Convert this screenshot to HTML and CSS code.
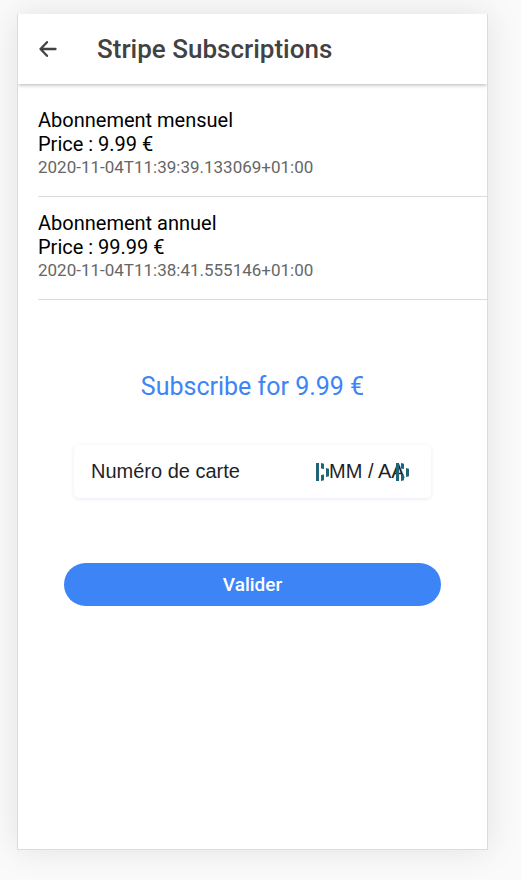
FILE: index.html
```html
<!DOCTYPE html>
<html lang="fr">
<head>
<meta charset="utf-8">
<meta name="viewport" content="width=device-width, initial-scale=1">
<title>Stripe Subscriptions</title>
<link rel="stylesheet" href="styles.css">
</head>
<body>
<div class="device">
  <header class="toolbar">
    <button class="back" type="button" aria-label="Back">
      <svg width="19" height="18" viewBox="0 0 19 18" fill="none" stroke="currentColor" stroke-width="2.3" stroke-linecap="round" stroke-linejoin="round"><path d="M9 2.200 2.500 9 9 15.800M2.500 9H17.500"/></svg>
    </button>
    <h1 class="title">Stripe Subscriptions</h1>
  </header>
  <main>
    <ul class="plans">
      <li class="plan">
        <h2 class="plan-line">Abonnement mensuel</h2>
        <p class="plan-line">Price : 9.99 €</p>
        <p class="plan-date">2020-11-04T11:39:39.133069+01:00</p>
      </li>
      <li class="plan">
        <h2 class="plan-line">Abonnement annuel</h2>
        <p class="plan-line">Price : 99.99 €</p>
        <p class="plan-date">2020-11-04T11:38:41.555146+01:00</p>
      </li>
    </ul>
    <form class="checkout">
      <h2 class="amount">Subscribe for 9.99 €</h2>
      <div class="card">
        <span class="field number">
          <input type="text" aria-label="Numéro de carte" placeholder="Numéro de carte">
          <svg class="fill-icon" width="13" height="20" viewBox="0 0 13 20" fill="currentColor"><path d="M0 1h3v18H0zM5 1l3 .7v5.300l-3-.5zM5 13l3-.5v5.800l-3 .7zM10 6l3 .8v7.400l-3 .8z"/></svg>
        </span>
        <span class="field expiry">
          <input type="text" aria-label="MM / AA" placeholder="MM / AA">
          <svg class="fill-icon" width="13" height="20" viewBox="0 0 13 20" fill="currentColor"><path d="M0 1h3v18H0zM5 1l3 .7v5.300l-3-.5zM5 13l3-.5v5.800l-3 .7zM10 6l3 .8v7.400l-3 .8z"/></svg>
        </span>
      </div>
      <button class="submit" type="button">Valider</button>
    </form>
  </main>
</div>
</body>
</html>
```
FILE: styles.css
```css
* {
  box-sizing: border-box;
}

body {
  margin: 0;
  min-height: 100vh;
  padding: 14px 33px 30px 17px;
  display: flex;
  background: #fafafa;
  font-family: Roboto, "Liberation Sans", sans-serif;
  color: #000;
}

h1, h2, p, ul {
  margin: 0;
  padding: 0;
  font-weight: 400;
}

.device {
  flex: 1;
  min-width: 0;
  background: #fff;
  border: 1px solid #dcdcdc;
  border-top: 0;
  box-shadow: 0 0 32px rgba(0, 0, 0, 0.1);
}

.toolbar {
  height: 70px;
  padding: 0 20px;
  display: flex;
  align-items: center;
  gap: 40px;
  color: #424242;
  box-shadow: 0 1px 4px rgba(0, 0, 0, 0.3);
  clip-path: inset(0 0 -8px 0);
}

.back {
  display: flex;
  padding: 0;
  border: 0;
  background: none;
  color: inherit;
}

.title {
  font-size: 26px;
  line-height: 30px;
  font-weight: 500;
}

.plans {
  list-style: none;
  padding: 10px 0 0 20px;
}

.plan {
  padding: 14px 0 18px;
  border-bottom: 1px solid #dcdcdc;
}

.plan-line {
  font-size: 20px;
  line-height: 24px;
}

.plan-date {
  font-size: 17px;
  line-height: 22px;
  color: #666;
}

.checkout {
  padding: 72px 46px 0;
}

.amount {
  font-size: 25px;
  line-height: 30px;
  text-align: center;
  color: #3d84f7;
}

.card {
  height: 53px;
  margin: 43px 10px 65px;
  padding: 0 22px 0 17px;
  display: flex;
  align-items: center;
  border-radius: 5px;
  box-shadow: 0 1px 4px #e6ebf1;
}

.field {
  position: relative;
  display: flex;
  align-items: center;
}

.number {
  flex: 1;
}

.expiry {
  width: 80px;
}

.field input {
  width: 100%;
  padding: 0;
  border: 0;
  outline: 0;
  background: none;
  font: 20px "Liberation Sans", sans-serif;
}

.field input::placeholder {
  color: #1f1f29;
  opacity: 1;
}

.fill-icon {
  position: absolute;
  right: 0;
  color: #206478;
}

.submit {
  width: 100%;
  height: 43px;
  border: 0;
  border-radius: 22px;
  background: #3d84f7;
  color: #fff;
  font: 500 19px Roboto, sans-serif;
}
```
